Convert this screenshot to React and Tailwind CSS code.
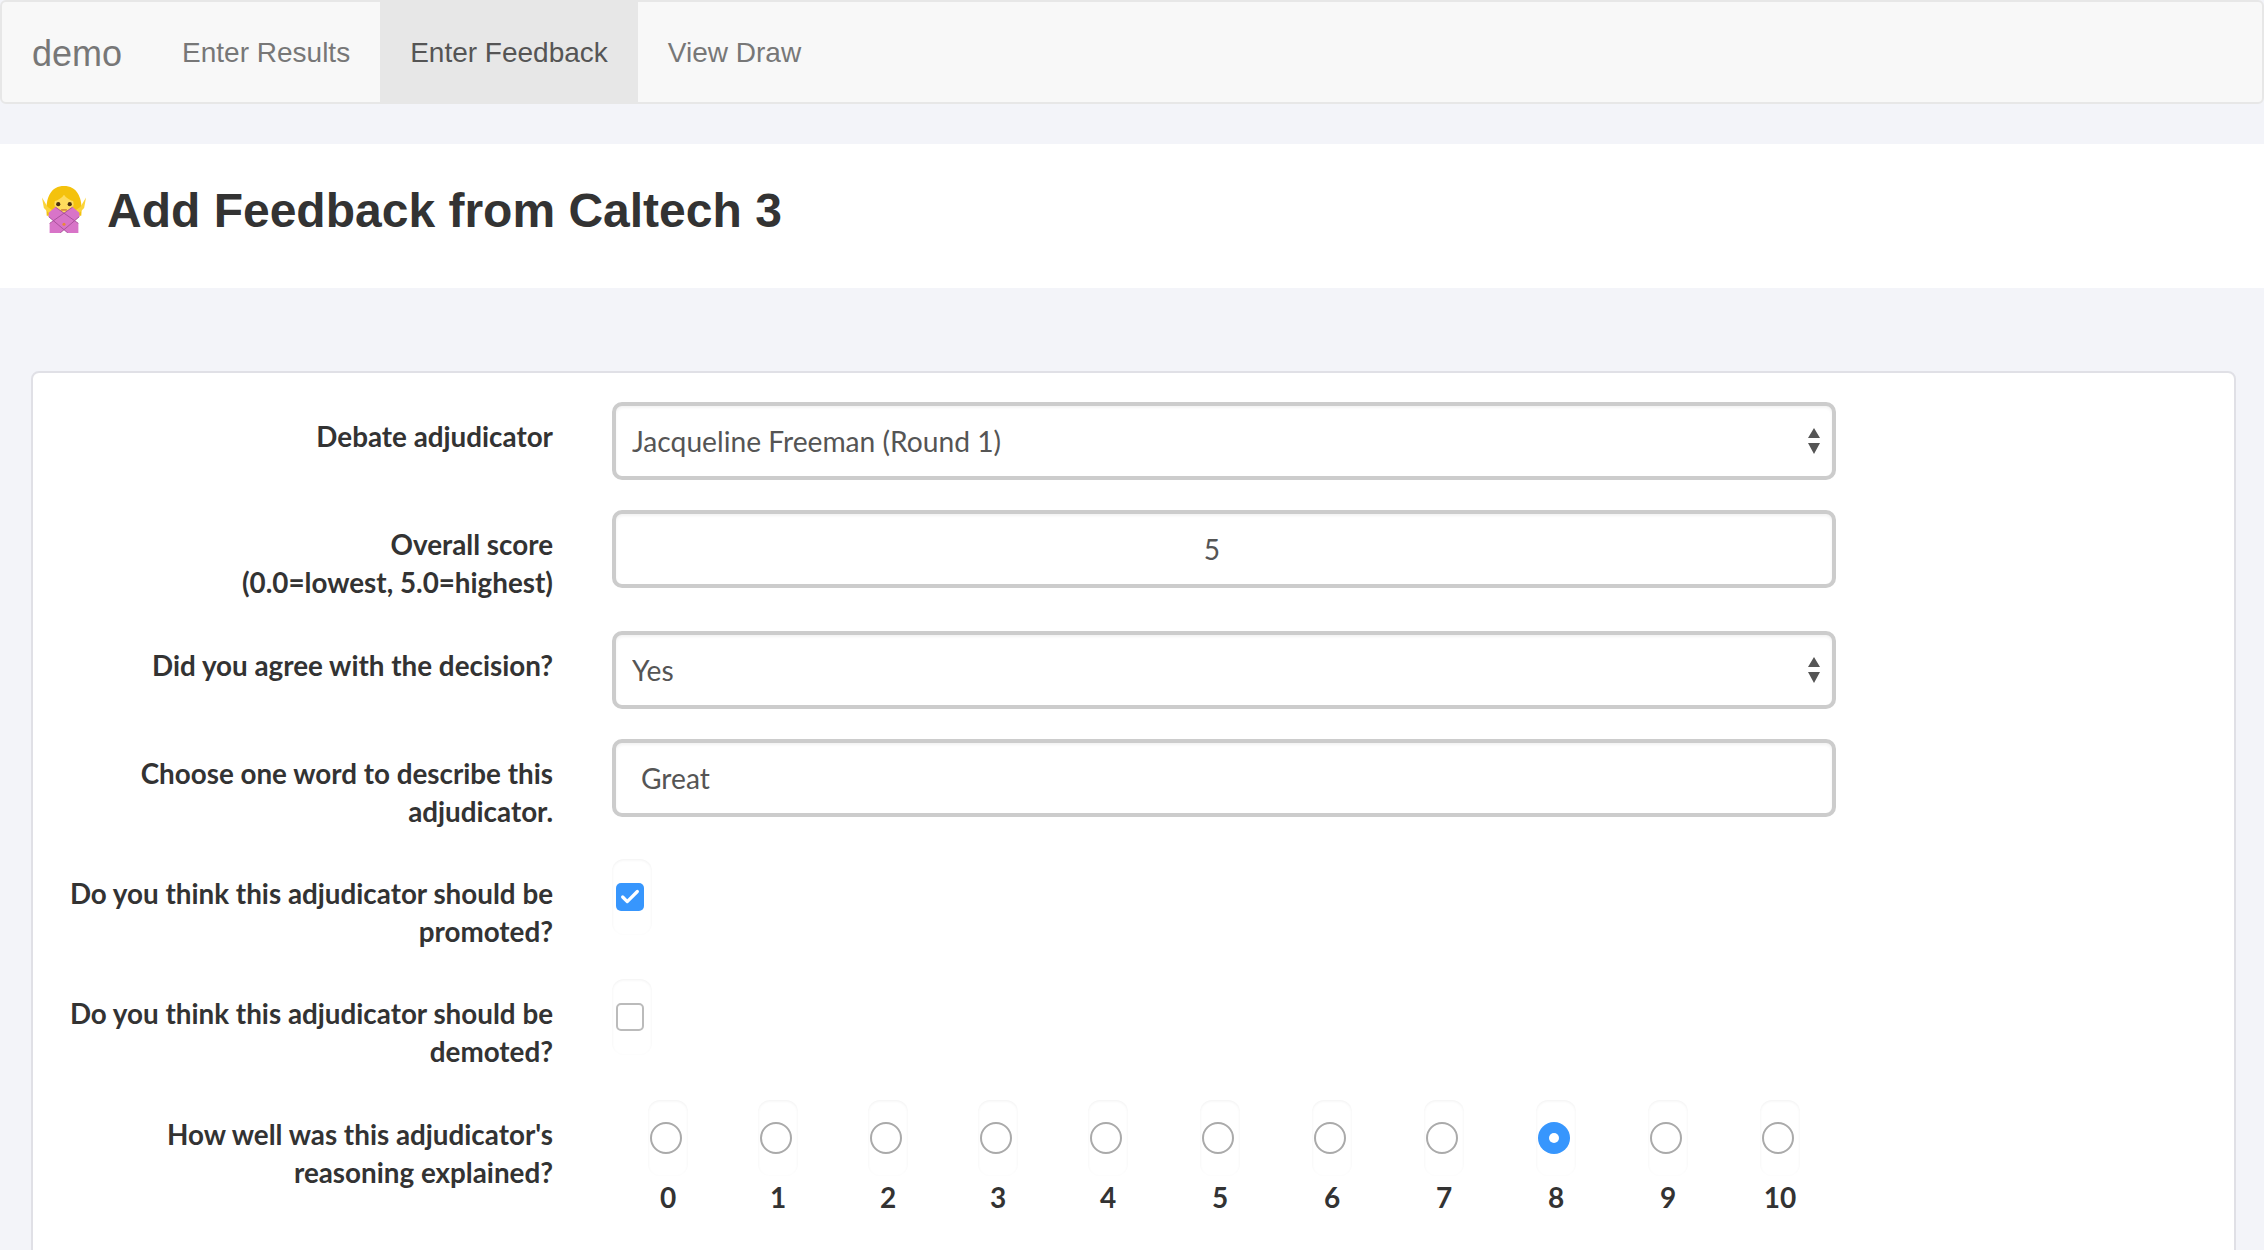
import { Check } from 'lucide-react';

const lato = 'font-["Lato","Noto_Sans",sans-serif]';
const fieldClass = `w-full h-[78px] rounded-[10px] border-4 border-[#cccccc] bg-white text-[28.2px] text-[#555555] outline-none shadow-[inset_0_2px_3px_rgba(0,0,0,0.05)] ${lato}`;

const SCORES = [
  { n: 0, w: 'w-[110px]' },
  { n: 1, w: 'w-[110px]' },
  { n: 2, w: 'w-[110px]' },
  { n: 3, w: 'w-[110px]' },
  { n: 4, w: 'w-[112px]' },
  { n: 5, w: 'w-[112px]' },
  { n: 6, w: 'w-[112px]' },
  { n: 7, w: 'w-[112px]' },
  { n: 8, w: 'w-[112px]' },
  { n: 9, w: 'w-[112px]' },
  { n: 10, w: 'w-[112px]' },
];

function Emoji() {
  return (
    <svg width="46" height="48" viewBox="0 0 48 50" className="mb-[4px] ml-[1px] shrink-0">
      <path d="M6 32C4 12 11 1 24 1s20 11 18 31z" fill="#f4c20d" />
      <path d="M1 13l6 10 6 4-3 4-7-7zM47 13l-6 10-6 4 3 4 7-7z" fill="#fbd43a" />
      <circle cx="24" cy="20" r="10" fill="#ffdc5d" />
      <path d="M13 17c5-1 9-4 11-7 2 3 6 6 11 7-1-8-5-11-11-11s-10 3-11 11z" fill="#f4c20d" />
      <circle cx="18" cy="20" r="2.2" fill="#4a2f10" />
      <circle cx="30" cy="20" r="2.2" fill="#4a2f10" />
      <path d="M21 26h6" stroke="#c4662d" strokeWidth="1.2" />
      <path d="M9 50V40L33 23l7 6v4L20 50zM39 50H28L8 33v-4l7-6 24 17z" fill="#d874c8" />
      <path d="M9 40L33 23M15 23l24 17" stroke="#a9509b" strokeWidth="1" fill="none" />
      <path d="M20 50L40 33M28 50L8 33" stroke="#a9509b" strokeWidth="1" fill="none" />
      <circle cx="24" cy="41" r="1.6" fill="#e8883a" />
    </svg>
  );
}

function SelectField({ value }) {
  return (
    <div className="relative">
      <select defaultValue={value} className={`${fieldClass} appearance-none pl-[16px] pr-12`}>
        <option>{value}</option>
      </select>
      <svg width="12" height="26" viewBox="0 0 12 26" className="absolute right-[16px] top-[26px] pointer-events-none">
        <path d="M6 0l6 10H0zM0 15h12L6 26z" fill="#555555" />
      </svg>
    </div>
  );
}

function Row({ label, className = '', children }) {
  return (
    <div className={`flex ${className}`}>
      <label className={`w-[520px] shrink-0 pt-[16px] text-right text-[27.8px] leading-[38px] font-bold text-[#333333] ${lato}`}>
        {label}
      </label>
      <div className="ml-[59px] w-[1224px]">{children}</div>
    </div>
  );
}

function CheckBox({ checked }) {
  return (
    <div className="w-[40px] h-[76px] rounded-[12px] shadow-[inset_0_1px_3px_rgba(0,0,0,0.06)] flex items-center pl-[4px]">
      {checked ? (
        <div className="w-[28px] h-[28px] rounded-[5px] bg-[#3796fd] flex items-center justify-center">
          <Check size={22} strokeWidth={3.5} className="text-white" />
        </div>
      ) : (
        <div className="w-[28px] h-[28px] rounded-[5px] bg-white border-2 border-[#bbbbbb]" />
      )}
    </div>
  );
}

function Radio({ n, w, selected }) {
  return (
    <div className={`${w} shrink-0`}>
      <div className="w-[40px] h-[76px] rounded-[12px] shadow-[inset_0_1px_3px_rgba(0,0,0,0.06)] flex items-center pl-[2px]">
        {selected ? (
          <div className="w-[32px] h-[32px] rounded-full bg-[#3796fd] flex items-center justify-center">
            <div className="w-[10px] h-[10px] rounded-full bg-white" />
          </div>
        ) : (
          <div className="w-[32px] h-[32px] rounded-full bg-white border-2 border-[#aaaaaa]" />
        )}
      </div>
      <div className={`mt-[2px] w-[40px] text-center text-[28px] leading-[38px] font-bold text-[#333333] ${lato}`}>{n}</div>
    </div>
  );
}

export default function App() {
  return (
    <div className='h-[1250px] overflow-hidden bg-[#f3f4f9] font-["Liberation_Sans",Arial,sans-serif]'>
      <nav className="flex h-[104px] rounded-[6px] border-2 border-[#e7e7e7] bg-[#f8f8f8]">
        <a className="pl-[30px] pr-[30px] pt-[32px] text-[36px] leading-[40px] text-[#777777]">demo</a>
        <a className="px-[30px] pt-[31px] text-[28px] leading-[40px] text-[#777777]">Enter Results</a>
        <a className="px-[30px] pt-[31px] text-[28px] leading-[40px] text-[#555555] bg-[#e7e7e7]">Enter Feedback</a>
        <a className="px-[30px] pt-[31px] text-[28px] leading-[40px] text-[#777777]">View Draw</a>
      </nav>

      <header className="mt-[40px] flex h-[144px] items-center gap-[20px] bg-white pb-[10px] pl-[40px]">
        <Emoji />
        <h1 className="text-[48px] font-bold leading-none text-[#333333]">Add Feedback from Caltech 3</h1>
      </header>

      <main className="ml-[31px] mr-[28px] mt-[83px] h-[900px] rounded-[8px] border-2 border-[#e0e0e6] bg-white pt-[29px]">
        <Row label="Debate adjudicator" className="mb-[30px]">
          <SelectField value="Jacqueline Freeman (Round 1)" />
        </Row>
        <Row label={<>Overall score<br />(0.0=lowest, 5.0=highest)</>} className="mb-[29px]">
          <input readOnly value="5" className={`${fieldClass} text-center pr-[24px]`} />
        </Row>
        <Row label="Did you agree with the decision?" className="mb-[30px]">
          <SelectField value="Yes" />
        </Row>
        <Row label={<>Choose one word to describe this<br />adjudicator.</>} className="mb-[28px]">
          <input readOnly value="Great" className={`${fieldClass} pl-[25px]`} />
        </Row>
        <Row label={<>Do you think this adjudicator should be<br />promoted?</>} className="mb-[28px]">
          <CheckBox checked />
        </Row>
        <Row label={<>Do you think this adjudicator should be<br />demoted?</>} className="mb-[29px]">
          <CheckBox />
        </Row>
        <Row label={<>How well was this adjudicator's<br />reasoning explained?</>}>
          <div className="ml-[36px] flex">
            {SCORES.map((s) => (
              <Radio key={s.n} n={s.n} w={s.w} selected={s.n === 8} />
            ))}
          </div>
        </Row>
      </main>
    </div>
  );
}
